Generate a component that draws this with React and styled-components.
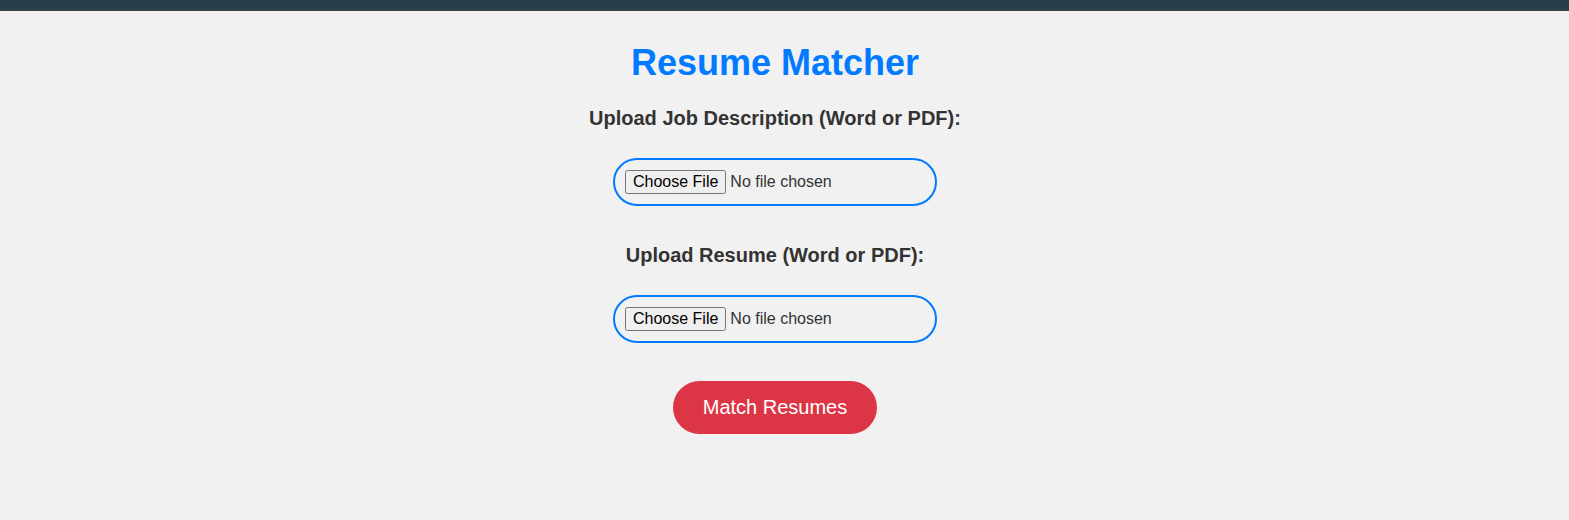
import styled, { createGlobalStyle } from "styled-components";

const GlobalStyle = createGlobalStyle`
  body { margin: 0; background: #f1f1f1; font-family: "Liberation Sans", Arial, sans-serif; }
`;

const TopBar = styled.div`height: 10px; background: #283f4a; border-bottom: 1px solid #3f4646;`;
// right padding stands in for the scrollbar gutter of the original page
const Container = styled.main`display:flex; flex-direction:column; align-items:center; padding:31px 19px 0 0;`;
const Title = styled.h1`margin:0 0 24px; color:#007bff; font-size:36px; line-height:41px; font-weight:bold;`;
const Form = styled.form`display:flex; flex-direction:column; align-items:center; gap:38px;`;
const Group = styled.div`display:flex; flex-direction:column; align-items:center;`;
const Label = styled.label`color:#333; font-size:20px; line-height:23px; font-weight:bold; margin-bottom:28px;`;
const FileInput = styled.input`
  box-sizing:border-box; width:324px; padding:10px; border:2px solid #007bff; border-radius:25px;
  font-family:"Liberation Sans", Arial, sans-serif; font-size:16px; color:#333; background:transparent;
  &::file-selector-button { font-family:inherit; font-size:16px; color:#000; }
`;
const Button = styled.button`
  padding:15px 30px; border:none; border-radius:27px; background:#dc3545; color:#fff;
  font-family:"Liberation Sans", Arial, sans-serif; font-size:20px; line-height:23px; cursor:pointer;
`;

export default function App() {
  return (
    <>
      <GlobalStyle />
      <TopBar />
      <Container>
        <Title>Resume Matcher</Title>
        <Form onSubmit={e => e.preventDefault()}>
          <Group>
            <Label htmlFor="jd">Upload Job Description (Word or PDF):</Label>
            <FileInput id="jd" type="file" accept=".doc,.docx,.pdf" />
          </Group>
          <Group>
            <Label htmlFor="resume">Upload Resume (Word or PDF):</Label>
            <FileInput id="resume" type="file" accept=".doc,.docx,.pdf" />
          </Group>
          <Button type="submit">Match Resumes</Button>
        </Form>
      </Container>
    </>
  );
}
